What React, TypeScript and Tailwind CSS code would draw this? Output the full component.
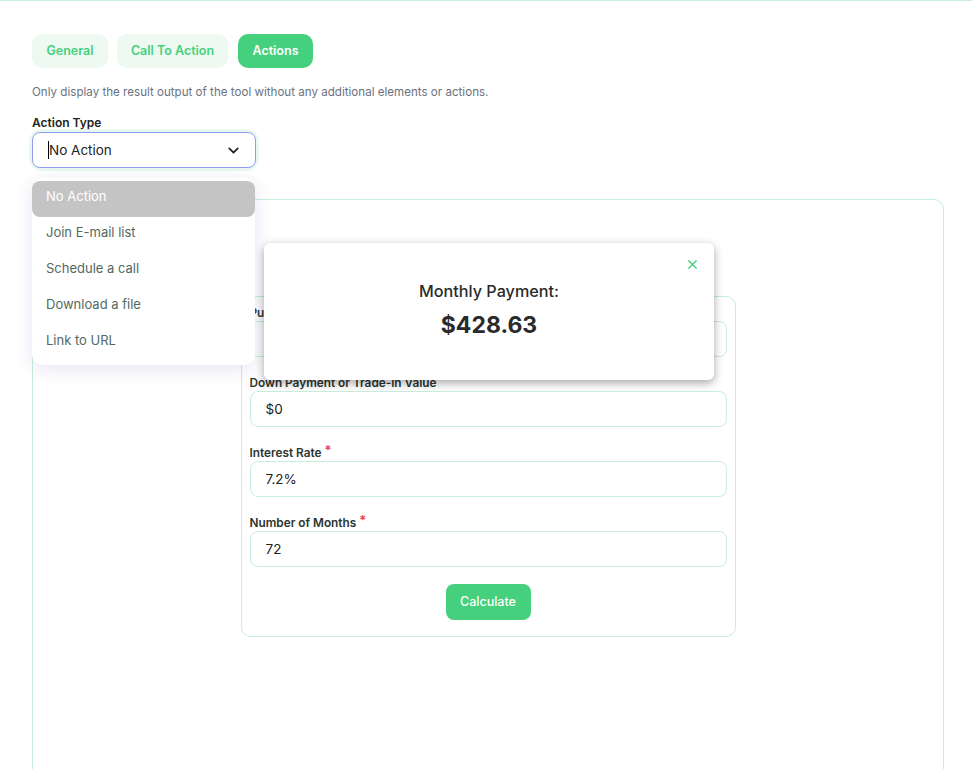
import React from "react";
import { ChevronDown, X } from "lucide-react";

const fields = [
  { label: "Purchase Price", value: "$25,000", req: true },
  { label: "Down Payment or Trade-in Value", value: "$0", req: false },
  { label: "Interest Rate", value: "7.2%", req: true },
  { label: "Number of Months", value: "72", req: true },
];

const options = ["No Action", "Join E-mail list", "Schedule a call", "Download a file", "Link to URL"];

export default function App() {
  return (
    <div
      className="relative min-h-[769px] w-[972px] overflow-hidden bg-white border-t border-[#c6f0d8]"
      style={{ fontFamily: "Inter, 'Noto Sans', sans-serif" }}
    >
      <div className="pl-8 pr-[28px] pt-[33px]">
        {/* Tabs */}
        <div className="flex gap-[9px]">
          <button className="h-[34px] w-[76px] rounded-[10px] bg-[#edf9f1] text-[12.5px] font-semibold text-[#46d07e]">
            General
          </button>
          <button className="h-[34px] w-[111px] rounded-[10px] bg-[#edf9f1] text-[12.5px] font-semibold text-[#46d07e]">
            Call To Action
          </button>
          <button className="ml-px h-[34px] w-[75px] rounded-[10px] bg-[#44d07c] text-[12.5px] font-semibold text-white">
            Actions
          </button>
        </div>

        <p className="mt-4 text-[11.6px] leading-4 text-[#6b7280]">
          Only display the result output of the tool without any additional elements or actions.
        </p>

        <div className="mt-[14px] flex h-4 items-end text-[12px] font-semibold leading-[14px] text-[#1f2420]">Action Type</div>

        <div className="mt-[2px] w-[224px] rounded-[10px] ring-[3px] ring-[#e9f8ef]">
          <div className="flex h-[36px] items-center justify-between rounded-[8px] border border-[#8d9cf3] bg-white pl-[15px] pr-[13px]">
            <div className="flex items-center">
              <span className="h-[18px] w-px bg-black" />
              <span className="text-[13.5px] text-[#222]">No Action</span>
            </div>
            <ChevronDown size={17} strokeWidth={2.4} className="text-[#222]" />
          </div>
        </div>

        {/* Big card */}
        <div className="mt-[31px] min-h-[620px] rounded-[10px] border border-[#c6efd9] pt-[96px]">
          <div className="mx-auto w-[495px] rounded-[10px] border border-[#c6efd9] px-[8px] pt-[8px] pb-[16px]">
            <div className="flex flex-col gap-[18px]">
              {fields.map((f) => (
                <div key={f.label}>
                  <div className="flex h-4 items-end pb-[1px] text-[11.8px] font-semibold leading-[13px] text-[#2c3530]">
                    {f.label}
                    {f.req && <span className="ml-[3px] mb-[3px] text-[13px] leading-[13px] text-[#e83a52]">*</span>}
                  </div>
                  <div className="flex h-[36px] items-center rounded-[8px] border border-[#c8eedb] pl-[15px] text-[13.5px] text-[#222]">
                    {f.value}
                  </div>
                </div>
              ))}
            </div>
            <div className="mt-[17px] flex justify-center">
              <button className="h-[36px] w-[85px] rounded-[8px] bg-[#44d07c] text-[12.5px] font-medium text-white">
                Calculate
              </button>
            </div>
          </div>
        </div>
      </div>

      {/* Dropdown menu */}
      <div className="absolute left-[32px] top-[177px] w-[223px] rounded-[10px] bg-white pt-[3px] pb-[4px] shadow-[0_4px_18px_rgba(110,110,190,0.18)]">
        {options.map((o, i) => (
          <div
            key={o}
            className={
              i === 0
                ? "flex h-[36px] items-center rounded-[8px] bg-[#c4c4c4] px-[14px] pb-[4px] text-[13px] text-white"
                : "flex h-[36px] items-center px-[14px] pb-[4px] text-[13px] text-[#52695f]"
            }
          >
            {o}
          </div>
        ))}
      </div>

      {/* Result popup */}
      <div className="absolute left-[264px] top-[242px] flex h-[137px] w-[450px] flex-col items-center rounded-[6px] bg-white shadow-[0_3px_10px_rgba(0,0,0,0.35)]">
        <X size={15} strokeWidth={2.2} className="absolute right-[14px] top-[14px] text-[#44d07c]" />
        <div className="mt-[36px] text-[16.2px] font-medium text-[#2a2a2a]">Monthly Payment:</div>
        <div className="mt-[5px] text-[23px] font-bold text-[#2a2a2a]">$428.63</div>
      </div>
    </div>
  );
}
